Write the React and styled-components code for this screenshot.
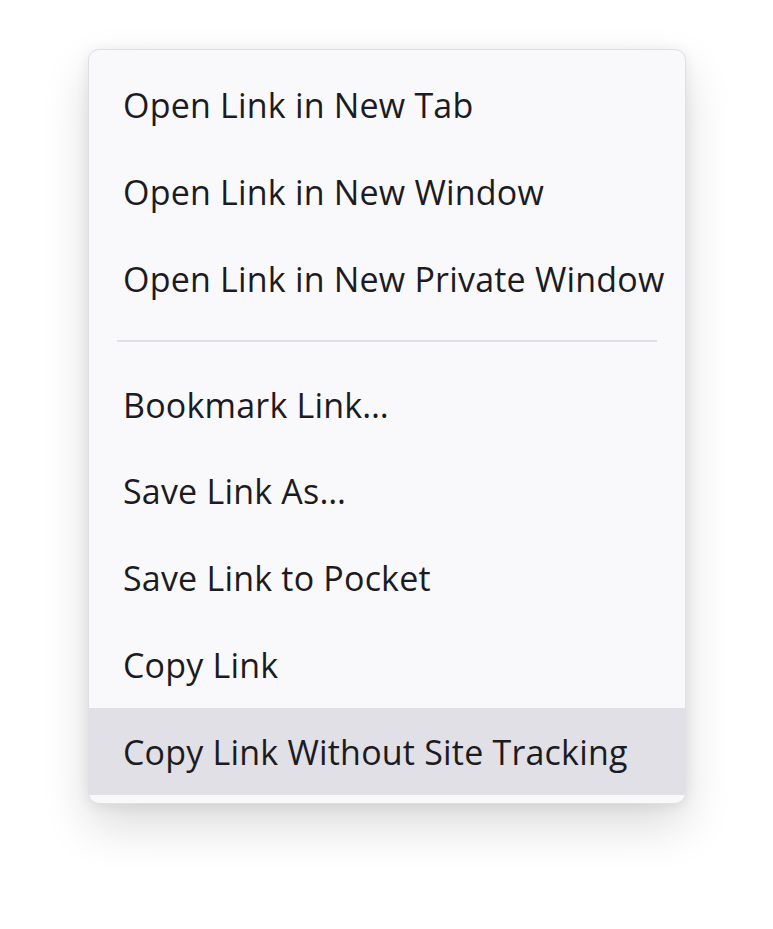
import React from 'react';
import styled, { createGlobalStyle } from 'styled-components';

const GlobalStyle = createGlobalStyle`
    html, body {
        margin: 0;
        background: #ffffff;
    }
    body {
        font-family: 'Open Sans', 'Noto Sans', sans-serif;
    }
`;

const Page = styled.div`
    display: flex;
    align-items: flex-start;
    padding: 49px 0 0 88px;
    min-height: 929px;
    box-sizing: border-box;
`;

const Menu = styled.ul`
    width: 598px;
    box-sizing: border-box;
    margin: 0;
    padding: 12px 0 8px;
    list-style: none;
    background: #f9f9fb;
    border: 1.5px solid #e0dfe6;
    border-radius: 11px;
    box-shadow: 0 22px 48px rgba(0, 0, 0, 0.14), 0 2px 14px rgba(0, 0, 0, 0.08);
    overflow: hidden;
`;

const Item = styled.li`
    display: flex;
    align-items: center;
    height: 86.75px;
    padding: 0 34px;
    font-size: 34px;
    letter-spacing: 0.2px;
    color: #1c1b22;
    white-space: nowrap;
    background: ${({ active }) => (active ? '#e0e0e6' : 'transparent')};
`;

const Separator = styled.li`
    height: 2px;
    margin: 18px 28px 19px;
    background: #e0dfe5;
`;

const groups = [
    ['Open Link in New Tab', 'Open Link in New Window', 'Open Link in New Private Window'],
    ['Bookmark Link…', 'Save Link As…', 'Save Link to Pocket', 'Copy Link', 'Copy Link Without Site Tracking'],
];

const App = () => (
    <>
        <GlobalStyle />
        <Page>
            <Menu>
                {groups.map((group, i) => (
                    <React.Fragment key={i}>
                        {i > 0 && <Separator />}
                        {group.map((label) => (
                            <Item key={label} active={label === 'Copy Link Without Site Tracking'}>
                                {label}
                            </Item>
                        ))}
                    </React.Fragment>
                ))}
            </Menu>
        </Page>
    </>
);

export default App;
